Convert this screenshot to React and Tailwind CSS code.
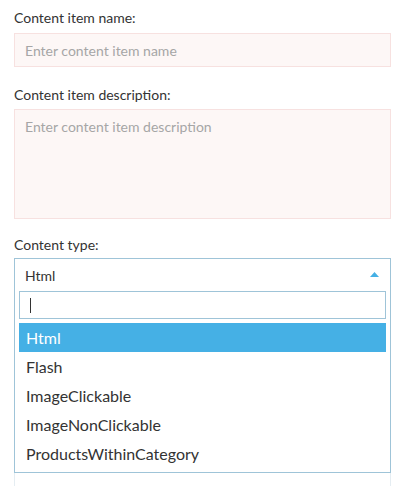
export default function App() {
  const options = ["Html", "Flash", "ImageClickable", "ImageNonClickable", "ProductsWithinCategory"];

  return (
    <div className="min-h-[486px] bg-white px-[14px] pt-[8px] text-[#333] font-['Lato','Open_Sans',sans-serif]">
      <label className="block text-[14px] leading-[20px]">Content item name:</label>
      <div className="mt-[5px] flex h-[34px] items-center border border-[#f7e1e0] bg-[#fdf7f6] px-[10px] text-[14px] text-[#a6a6a6]">
        Enter content item name
      </div>

      <label className="mt-[18px] block text-[14px] leading-[20px]">Content item description:</label>
      <div className="mt-[4px] h-[110px] border border-[#f7e1e0] bg-[#fdf7f6] px-[10px] pt-[7px] text-[14px] leading-[20px] text-[#a6a6a6]">
        Enter content item description
      </div>

      <label className="mt-[16px] block text-[14px] leading-[20px]">Content type:</label>
      <div className="mt-[3px] border border-[#9fc4d8] bg-white px-[4px] pb-[4px]">
        <div className="flex h-[32px] items-center justify-between pl-[6px] pr-[7px] text-[14px]">
          <span>Html</span>
          <svg width="9" height="5" viewBox="0 0 9 5" className="mt-[-2px]">
            <polygon points="4.5,0 9,5 0,5" fill="#45b0e5" />
          </svg>
        </div>
        <div className="flex h-[28px] items-center border border-[#9fc4d8] pl-[10px]">
          <span className="block h-[15px] w-[1px] bg-[#333]" />
        </div>
        <ul className="mt-[4px]">
          {options.map((o, i) => (
            <li
              key={o}
              className={
                i === 0
                  ? "flex h-[29px] items-center bg-[#45b0e5] pl-[7px] text-[16px] text-white"
                  : "flex h-[29px] items-center pl-[7px] text-[16px] text-[#333]"
              }
            >
              {o}
            </li>
          ))}
        </ul>
      </div>
      <div className="h-[20px] border-x border-[#e5edf2]" />
    </div>
  );
}
